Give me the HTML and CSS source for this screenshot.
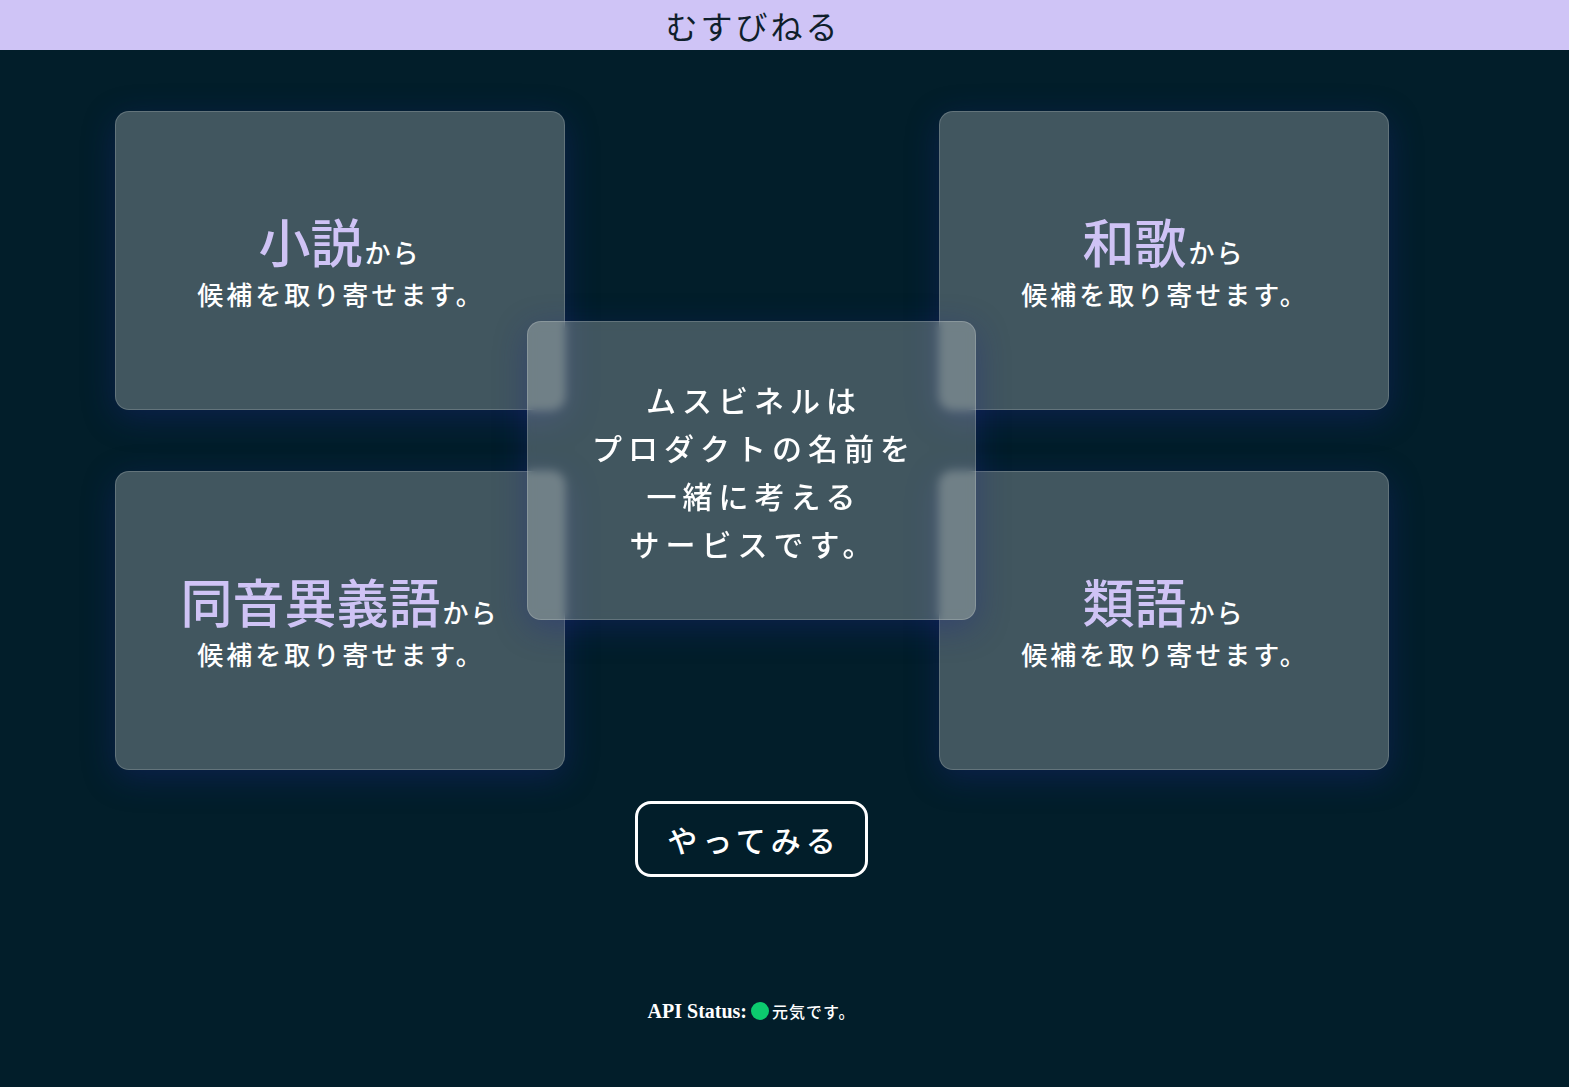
FILE: index.html
```html
<!DOCTYPE html>
<html lang="ja">
<head>
<meta charset="utf-8">
<title>むすびねる</title>
<link rel="stylesheet" href="styles.css">
</head>
<body>
<header class="topbar">
  <div class="topbar-inner">
    <h1 class="brand">むすびねる</h1>
  </div>
</header>
<main class="page">
  <section class="board">
    <div class="card">
      <p class="card-head"><span class="accent">小説</span><span class="from">から</span></p>
      <p class="card-sub">候補を取り寄せます。</p>
    </div>
    <div class="card">
      <p class="card-head"><span class="accent">和歌</span><span class="from">から</span></p>
      <p class="card-sub">候補を取り寄せます。</p>
    </div>
    <div class="card">
      <p class="card-head"><span class="accent">同音異義語</span><span class="from">から</span></p>
      <p class="card-sub">候補を取り寄せます。</p>
    </div>
    <div class="card">
      <p class="card-head"><span class="accent">類語</span><span class="from">から</span></p>
      <p class="card-sub">候補を取り寄せます。</p>
    </div>
    <div class="card card-center">
      <p class="intro">ムスビネルは<br>プロダクトの名前を<br>一緒に考える<br>サービスです。</p>
    </div>
  </section>
  <a class="try-btn" href="#">やってみる</a>
  <p class="status"><span class="status-label">API Status:</span><span class="dot"></span><span class="status-text">元気です。</span></p>
</main>
</body>
</html>
```

FILE: styles.css
```css
* { box-sizing: border-box; }

html, body {
  margin: 0;
  padding: 0;
}

body {
  background: #021e2a;
  color: #ffffff;
  font-family: "Noto Sans CJK JP", "Noto Sans", sans-serif;
  min-height: 1087px;
  overflow: hidden;
}

.topbar {
  height: 50px;
  background: #cfc4f6;
}

.topbar-inner {
  width: 1503px;
  height: 50px;
  display: flex;
  align-items: center;
  justify-content: center;
}

.brand {
  margin: 0;
  padding-left: 3px;
  font-size: 32px;
  font-weight: 400;
  letter-spacing: 3px;
  line-height: 50px;
  color: #0f1f2b;
}

.page {
  width: 1503px;
  display: flex;
  flex-direction: column;
  align-items: center;
}

.board {
  position: relative;
  margin-top: 61px;
  display: grid;
  grid-template-columns: 450px 450px;
  grid-template-rows: 299px 299px;
  column-gap: 374px;
  row-gap: 61px;
}

.card {
  background: rgba(255, 255, 255, 0.25);
  border: 1px solid rgba(255, 255, 255, 0.18);
  border-radius: 14px;
  box-shadow: 0 8px 32px 0 rgba(31, 38, 135, 0.37);
  display: flex;
  flex-direction: column;
  align-items: center;
  justify-content: center;
  padding-top: 4px;
}

.card-center {
  position: absolute;
  left: 412px;
  top: 210px;
  width: 449px;
  height: 299px;
  backdrop-filter: blur(5px);
  -webkit-backdrop-filter: blur(5px);
  padding-top: 1px;
}

.card-head {
  margin: 0;
  line-height: 48px;
  white-space: nowrap;
}

.accent {
  color: #cfc3f5;
  font-size: 52px;
  font-weight: 500;
}

.from {
  font-size: 26px;
  font-weight: 500;
  letter-spacing: 2px;
  margin-left: 2px;
}

.card-sub {
  margin: 0;
  font-size: 26px;
  font-weight: 500;
  letter-spacing: 3px;
  line-height: 28px;
  padding-left: 3px;
}

.intro {
  margin: 0;
  text-align: center;
  font-size: 30px;
  font-weight: 500;
  letter-spacing: 6px;
  line-height: 48px;
  padding-left: 6px;
}

.try-btn {
  margin-top: 31px;
  width: 233px;
  height: 76px;
  border: 3px solid #ffffff;
  border-radius: 16px;
  display: flex;
  align-items: center;
  justify-content: center;
  padding-left: 5px;
  color: #ffffff;
  text-decoration: none;
  font-size: 30px;
  font-weight: 500;
  letter-spacing: 5px;
}

.status {
  margin: 122px 0 0 0;
  display: flex;
  align-items: center;
  line-height: 24px;
  padding-left: 0;
}

.status-label {
  font-family: "Liberation Serif", "Times New Roman", serif;
  font-weight: 700;
  font-size: 20px;
}

.dot {
  display: inline-block;
  width: 18px;
  height: 18px;
  border-radius: 50%;
  background: #0ccb6e;
  margin: 0 3px 0 4px;
}

.status-text {
  font-size: 16px;
  font-weight: 500;
  letter-spacing: 1px;
}
```
